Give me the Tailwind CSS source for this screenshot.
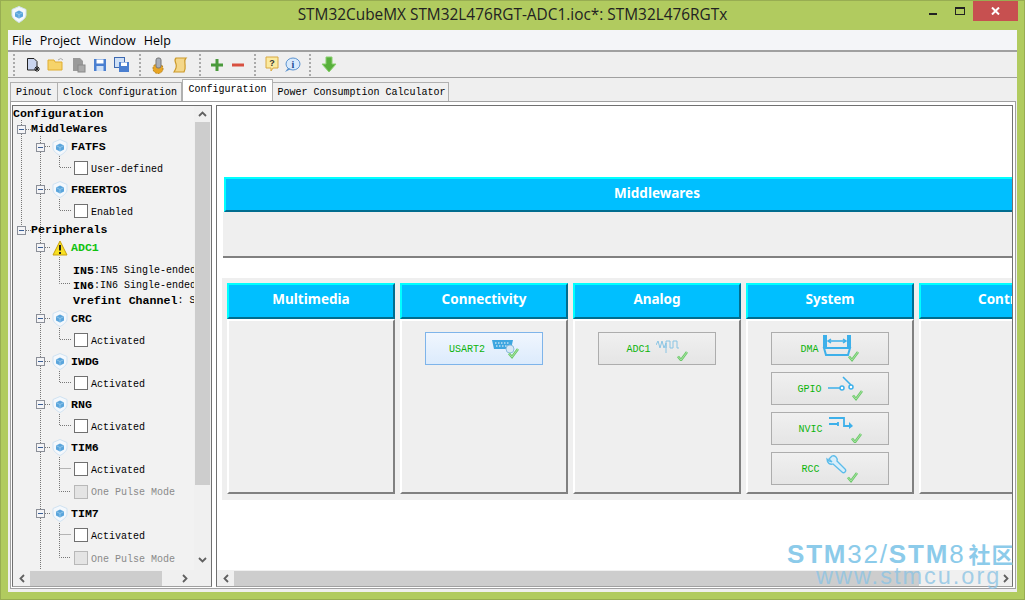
<!DOCTYPE html>
<html><head><meta charset="utf-8"><script src="https://cdn.jsdelivr.net/npm/@tailwindcss/browser@4"></script></head>
<body class="m-0 overflow-hidden">
<svg width="0" height="0" class="absolute">
<defs>
<g id="cube"><path d="M8 0.5 L15 3.5 V9 C15 12 11 15 8 16.5 C5 15 1 12 1 9 V3.5Z" fill="#f4f8fc" stroke="#cfe2f2"/><path d="M8 4.5 L12 6.5 V10.5 L8 12.5 L4 10.5 V6.5Z" fill="#5aa5dc"/><path d="M4 6.5 L8 8.5 L12 6.5 M8 8.5 V12.5" fill="none" stroke="#a8d2ee" stroke-width=".7"/></g>
<g id="minus"><rect x=".5" y=".5" width="8" height="8" fill="#f4f4f6" stroke="#8b8f98"/><rect x="2" y="4" width="5" height="1" fill="#3b5f95"/></g>
<g id="chk"><path d="M1 6.5 L4 10 L10 2" fill="none" stroke="#6cc86a" stroke-width="2.6"/><path d="M1 6.5 L4 10 L10 2" fill="none" stroke="#a6e4a0" stroke-width="1"/></g>
</defs>
</svg>
<div class="relative w-[1025px] h-[600px] bg-[#b1cb5f] border border-[#98ad52] pt-[29px] pl-[7px] pr-[7px] pb-[7px] overflow-hidden font-['Liberation_Mono',monospace]">
  <!-- title bar -->
  <svg class="absolute left-[10px] top-[5px]" width="16" height="17" viewBox="0 0 16 17"><use href="#cube"/></svg>
  <div class="absolute left-0 right-0 top-[5px] text-center text-[15.4px] leading-[18px] text-[#222] font-['Open_Sans',sans-serif]">STM32CubeMX STM32L476RGT-ADC1.ioc*: STM32L476RGTx</div>
  <div class="absolute left-[928px] top-[12px] w-[8px] h-[2px] bg-[#222]"></div>
  <div class="absolute left-[954px] top-[6px] w-[10px] h-[8px] border border-t-2 border-[#222]"></div>
  <div class="absolute left-[972px] top-0 w-[45px] h-[20px] bg-[#c75050] flex items-center justify-center text-white"><svg width="9" height="8" viewBox="0 0 9 8"><path d="M1 0.5 L8 7.5 M8 0.5 L1 7.5" stroke="#fff" stroke-width="2"/></svg></div>

  <div class="w-[1009px] h-[562px] bg-[#efefef] flex flex-col">
    <!-- menu -->
    <div class="h-[18px] pt-[2px] bg-[#f4f5f8] border-b-2 border-[#a0a0a0] box-content flex items-center gap-[8px] pl-[4px] text-[12.5px] text-black font-['Open_Sans',sans-serif]">
      <span>File</span><span>Project</span><span>Window</span><span>Help</span>
    </div>
    <!-- toolbar -->
    <div class="h-[25px] border-b border-[#a0a0a0] box-content flex items-center pl-[5px]">
      <div class="w-[2px] h-[22px] border-l-2 border-dotted border-[#aaa] mr-[10px]"></div>
      <div class="flex items-center gap-[6px]">
        <svg width="16" height="16" viewBox="0 0 16 16"><path d="M2.5 1.5H9L12 4.5V13H2.5Z" fill="#c9d4ee" stroke="#222"/><path d="M10 10L14 14M14 10L10 14M12 9V15M9 12H15" stroke="#222" stroke-width="1"/></svg>
        <svg width="18" height="16" viewBox="0 0 18 16"><path d="M1 3H7L8 5H15V13H1Z" fill="#f6d36a" stroke="#e0ad30"/><path d="M11 3 Q14 0 16 3" fill="none" stroke="#aaa"/></svg>
        <svg width="16" height="16" viewBox="0 0 16 16"><path d="M2 1H9L12 4V14H2Z" fill="#9a9a9a"/><rect x="7" y="8" width="7" height="7" fill="#aaa" stroke="#888"/></svg>
        <svg width="15" height="16" viewBox="0 0 15 16"><rect x="1" y="2" width="12" height="12" fill="#4a7fd0"/><rect x="3.5" y="2.5" width="7" height="4" fill="#fff"/><rect x="3.5" y="9" width="7" height="5" fill="#cfe0f6"/></svg>
        <svg width="16" height="16" viewBox="0 0 16 16"><rect x="0.5" y="0.5" width="10" height="10" fill="#cfe0f6" stroke="#3c68b0"/><rect x="5" y="5" width="10" height="10" fill="#4a7fd0"/><rect x="7" y="5.5" width="6" height="3.5" fill="#fff"/></svg>
      </div>
      <div class="w-[2px] h-[22px] border-l-2 border-dotted border-[#aaa] ml-[9px] mr-[8px]"></div>
      <div class="flex items-center gap-[4px]">
        <svg width="18" height="18" viewBox="0 0 18 18"><circle cx="9" cy="12.5" r="5" fill="#e8a524" stroke="#b67d10" stroke-dasharray="2 1"/><rect x="7" y="2" width="5" height="10" rx="2" fill="#a8aeb8" stroke="#777"/></svg>
        <svg width="18" height="18" viewBox="0 0 18 18"><path d="M5 2H15C13 4 14 6 14 8S15 12 13 16H3C5 13 6 11 5 8S3 4 5 2Z" fill="#f4d78a" stroke="#cc9a2a" stroke-width="1.2"/></svg>
      </div>
      <div class="w-[2px] h-[22px] border-l-2 border-dotted border-[#aaa] ml-[10px] mr-[9px]"></div>
      <div class="flex items-center gap-[7px]">
        <svg width="14" height="14" viewBox="0 0 14 14"><path d="M7 1V13M1 7H13" stroke="#4a9a3c" stroke-width="3"/></svg>
        <svg width="14" height="14" viewBox="0 0 14 14"><path d="M1 7H13" stroke="#d85040" stroke-width="3"/></svg>
      </div>
      <div class="w-[2px] h-[22px] border-l-2 border-dotted border-[#aaa] ml-[9px] mr-[9px]"></div>
      <div class="flex items-center gap-[4px]">
        <svg width="14" height="17" viewBox="0 0 14 17"><path d="M1 1H13V12H8L6 15V12H1Z" fill="#fbeaa0" stroke="#d8a840"/><text x="7" y="10" font-size="9" font-weight="700" text-anchor="middle" fill="#333" font-family="Liberation Sans">?</text></svg>
        <svg width="18" height="16" viewBox="0 0 18 16"><ellipse cx="10" cy="7" rx="7" ry="6" fill="#d8eafc" stroke="#5b93d0"/><path d="M5 11 L2 15 L8 12Z" fill="#5b93d0"/><text x="10" y="11" font-size="10" font-weight="700" text-anchor="middle" fill="#1c4d96" font-family="Liberation Serif">i</text></svg>
      </div>
      <div class="w-[2px] h-[22px] border-l-2 border-dotted border-[#aaa] ml-[8px] mr-[10px]"></div>
      <svg width="16" height="17" viewBox="0 0 16 17"><path d="M5 1H11V8H15L8 16L1 8H5Z" fill="#58b03c" stroke="#8ad070"/></svg>
    </div>
    <!-- tabs -->
    <div class="h-[23px] flex items-end pl-[2px] text-[10px] text-black">
      <div class="h-[19px] w-[48px] bg-[#f0f0f0] border border-b-0 border-[#b0b0b0] flex items-center justify-center">Pinout</div>
      <div class="h-[19px] w-[124px] pl-[1px] bg-[#f0f0f0] border border-l-0 border-b-0 border-[#b0b0b0] flex items-center justify-center">Clock Configuration</div>
      <div class="h-[22px] w-[91px] bg-white border border-b-0 border-[#b0b0b0] flex items-center justify-center pb-[3px]">Configuration</div>
      <div class="h-[19px] w-[176px] pl-[2px] bg-[#f0f0f0] border border-l-0 border-b-0 border-[#b0b0b0] flex items-center justify-center">Power Consumption Calculator</div>
    </div>
    <!-- pane -->
    <div class="flex-1 mx-[2px] mb-[3px] bg-white border border-[#a0a0a0] p-[1px] flex gap-[4px] min-h-0 w-[1006px]">
      <!-- tree panel -->
      <div class="w-[200px] h-[482px] mt-[2px] border border-[#707070] border-b-[#a0a0a0] bg-[#f2f2f2] flex flex-col">
        <div class="flex h-[464px] shrink-0">
          <div class="relative w-[181px] h-[464px] overflow-hidden text-[10px] text-black pt-[1px] whitespace-nowrap">
            <svg class="absolute left-0 top-0" width="181" height="464" viewBox="13 106 181 464" fill="none" stroke="#777" stroke-dasharray="1 1">
              <path d="M21.5 120V226M40.5 136V570M26 129.5H31M26 230.5H31"/>
              <path d="M45 146.5H51M45 189.5H51M45 247.5H51M45 318.5H51M45 361.5H51M45 404.5H51M45 447.5H51M45 513.5H51"/>
              <path d="M59.5 156V167.5H71M59.5 199V210.5H71M59.5 257V283.5H71M59.5 328V339.5H71M59.5 371V382.5H71M59.5 414V425.5H71M59.5 457V491.5H71M59.5 468.5H71M59.5 523V557.5H71M59.5 534.5H71"/>
            </svg>
            <div class="relative h-[14px] leading-[14px] font-bold text-[11.6px]">Configuration</div>
            <div class="relative h-[16px] flex items-center pl-[4px] gap-[5px] font-bold text-[11.6px]"><svg width="9" height="9"><use href="#minus"/></svg><span>MiddleWares</span></div>

            <div class="relative h-[20px] flex items-center pl-[23px] gap-[7px] font-bold text-[11.6px]"><svg width="9" height="9"><use href="#minus"/></svg><svg width="16" height="17" viewBox="0 0 16 17"><use href="#cube"/></svg><span class="-ml-[4px]">FATFS</span></div>
            <div class="relative h-[22px] flex items-center pl-[61px] gap-[3px]"><span class="w-[14px] h-[14px] bg-white border border-[#707070]"></span><span class="mt-[2px]">User-defined</span></div>
            <div class="relative h-[21px] flex items-center pl-[23px] gap-[7px] font-bold text-[11.6px]"><svg width="9" height="9"><use href="#minus"/></svg><svg width="16" height="17" viewBox="0 0 16 17"><use href="#cube"/></svg><span class="-ml-[4px]">FREERTOS</span></div>
            <div class="relative h-[22px] flex items-center pl-[61px] gap-[3px]"><span class="w-[14px] h-[14px] bg-white border border-[#707070]"></span><span class="mt-[2px]">Enabled</span></div>

            <div class="relative h-[16px] flex items-center pl-[4px] gap-[5px] font-bold text-[11.6px]"><svg width="9" height="9"><use href="#minus"/></svg><span>Peripherals</span></div>
            <div class="relative h-[19px] mb-[5px] flex items-center pl-[23px] gap-[7px] font-bold text-[11.6px] text-[#0fc20f]"><svg width="9" height="9"><use href="#minus"/></svg><svg width="16" height="16" viewBox="0 0 16 16"><path d="M8 1 L15 15 H1Z" fill="#f8e020" stroke="#c8a010"/><path d="M8 5V10.5M8 12V14" stroke="#222" stroke-width="2"/></svg><span class="-ml-[4px]">ADC1</span></div>
            <div class="relative h-[15px] pt-[2px] flex items-center pl-[60px]"><b class="text-[11.6px]">IN5</b>:IN5 Single-ended</div>
            <div class="relative h-[15px] pt-[2px] flex items-center pl-[60px]"><b class="text-[11.6px]">IN6</b>:IN6 Single-ended</div>
            <div class="relative h-[15px] pt-[2px] mb-[1px] flex items-center pl-[60px]"><b class="text-[11.6px]">Vrefint Channel</b>: Single</div>

            <div class="relative h-[21px] flex items-center pl-[23px] gap-[7px] font-bold text-[11.6px]"><svg width="9" height="9"><use href="#minus"/></svg><svg width="16" height="17" viewBox="0 0 16 17"><use href="#cube"/></svg><span class="-ml-[4px]">CRC</span></div>
            <div class="relative h-[22px] flex items-center pl-[61px] gap-[3px]"><span class="w-[14px] h-[14px] bg-white border border-[#707070]"></span><span class="mt-[2px]">Activated</span></div>
            <div class="relative h-[21px] flex items-center pl-[23px] gap-[7px] font-bold text-[11.6px]"><svg width="9" height="9"><use href="#minus"/></svg><svg width="16" height="17" viewBox="0 0 16 17"><use href="#cube"/></svg><span class="-ml-[4px]">IWDG</span></div>
            <div class="relative h-[22px] flex items-center pl-[61px] gap-[3px]"><span class="w-[14px] h-[14px] bg-white border border-[#707070]"></span><span class="mt-[2px]">Activated</span></div>
            <div class="relative h-[21px] flex items-center pl-[23px] gap-[7px] font-bold text-[11.6px]"><svg width="9" height="9"><use href="#minus"/></svg><svg width="16" height="17" viewBox="0 0 16 17"><use href="#cube"/></svg><span class="-ml-[4px]">RNG</span></div>
            <div class="relative h-[22px] flex items-center pl-[61px] gap-[3px]"><span class="w-[14px] h-[14px] bg-white border border-[#707070]"></span><span class="mt-[2px]">Activated</span></div>
            <div class="relative h-[21px] flex items-center pl-[23px] gap-[7px] font-bold text-[11.6px]"><svg width="9" height="9"><use href="#minus"/></svg><svg width="16" height="17" viewBox="0 0 16 17"><use href="#cube"/></svg><span class="-ml-[4px]">TIM6</span></div>
            <div class="relative h-[22px] flex items-center pl-[61px] gap-[3px]"><span class="w-[14px] h-[14px] bg-white border border-[#707070]"></span><span class="mt-[2px]">Activated</span></div>
            <div class="relative h-[23px] flex items-center pl-[61px] gap-[3px] text-[#8a8a8a]"><span class="w-[14px] h-[14px] bg-[#e4e4e4] border border-[#b8b8b8]"></span><span class="mt-[2px]">One Pulse Mode</span></div>
            <div class="relative h-[21px] flex items-center pl-[23px] gap-[7px] font-bold text-[11.6px]"><svg width="9" height="9"><use href="#minus"/></svg><svg width="16" height="17" viewBox="0 0 16 17"><use href="#cube"/></svg><span class="-ml-[4px]">TIM7</span></div>
            <div class="relative h-[22px] flex items-center pl-[61px] gap-[3px]"><span class="w-[14px] h-[14px] bg-white border border-[#707070]"></span><span class="mt-[2px]">Activated</span></div>
            <div class="relative h-[24px] flex items-center pl-[61px] gap-[3px] text-[#8a8a8a]"><span class="w-[14px] h-[14px] bg-[#e4e4e4] border border-[#b8b8b8]"></span><span class="mt-[2px]">One Pulse Mode</span></div>
          </div>
          <!-- v scrollbar -->
          <div class="w-[17px] bg-[#f0f0f0] flex flex-col items-center">
            <svg class="my-[5px] shrink-0" width="9" height="6" viewBox="0 0 9 6"><path d="M1 5 L4.5 1.5 L8 5" fill="none" stroke="#606060" stroke-width="1.8"/></svg>
            <div class="w-[15px] h-[363px] bg-[#cdcdcd]"></div>
            <svg class="mt-[72px] shrink-0" width="9" height="6" viewBox="0 0 9 6"><path d="M1 1 L4.5 4.5 L8 1" fill="none" stroke="#606060" stroke-width="1.8"/></svg>
          </div>
        </div>
        <!-- h scrollbar -->
        <div class="h-[16px] bg-[#f0f0f0] flex items-center">
          <svg class="ml-[6px] mr-[5px] shrink-0" width="6" height="9" viewBox="0 0 6 9"><path d="M5 1 L1.5 4.5 L5 8" fill="none" stroke="#606060" stroke-width="1.8"/></svg>
          <div class="w-[132px] h-[15px] bg-[#cdcdcd]"></div>
          <svg class="ml-[20px] shrink-0" width="6" height="9" viewBox="0 0 6 9"><path d="M1 1 L4.5 4.5 L1 8" fill="none" stroke="#606060" stroke-width="1.8"/></svg>
        </div>
      </div>
      <!-- main panel -->
      <div class="w-[797px] h-[482px] mt-[2px] border border-[#707070] border-b-[#a0a0a0] bg-white flex flex-col">
        <div class="flex-1 min-h-0 overflow-hidden pt-[71px]">
          <div class="ml-[7px] w-[864px] h-[35px] bg-[#00bfff] border-t-2 border-l-2 border-t-[#00ffff] border-l-[#00ffff] border-b-2 border-b-[#006d8f] flex items-center justify-center pb-[3px] text-white font-bold text-[13.5px] font-['Noto_Sans',sans-serif]">Middlewares</div>
          <div class="ml-[6px] w-[800px] h-[46px] bg-[#efefef] border-b-2 border-[#808080]"></div>
          <div class="ml-[5px] mt-[20px] w-[810px] h-[222px] bg-[#efefef] p-[5px] grid grid-cols-[168px_168px_168px_168px_168px] gap-[5px] font-['Noto_Sans',sans-serif]">

            <div class="flex flex-col">
              <div class="h-[36px] bg-[#00bfff] border-t-2 border-l-2 border-t-[#00ffff] border-l-[#00ffff] border-b-2 border-r-2 border-b-[#006d8f] border-r-[#006d8f] flex items-center justify-center pb-[4px] text-white font-bold text-[13.5px]">Multimedia</div>
              <div class="h-[175px] bg-[#efefef] border-2 border-t-white border-l-white border-r-[#808080] border-b-[#808080]"></div>
            </div>

            <div class="flex flex-col">
              <div class="h-[36px] bg-[#00bfff] border-t-2 border-l-2 border-t-[#00ffff] border-l-[#00ffff] border-b-2 border-r-2 border-b-[#006d8f] border-r-[#006d8f] flex items-center justify-center pb-[4px] text-white font-bold text-[13.5px]">Connectivity</div>
              <div class="h-[175px] bg-[#efefef] border-2 border-t-white border-l-white border-r-[#808080] border-b-[#808080] pt-[11px] flex flex-col items-center">
                <div class="w-[118px] h-[33px] border border-[#7eb4ea] bg-gradient-to-b from-[#f0f6fe] to-[#dcebfc] flex items-center justify-center gap-[6px] font-['Liberation_Mono',monospace] text-[10px] text-[#0cb40c]">
                  <span class="mt-[2px]">USART2</span>
                  <svg width="28" height="24" viewBox="0 0 28 24"><path d="M1 3H22L20 12H3Z" fill="#3da6e0"/><path d="M4 6H19M5 9H18" stroke="#fff" stroke-dasharray="1.5 1.5"/><circle cx="19" cy="12" r="4" fill="#d8e8f4" stroke="#8cbcdc"/><use href="#chk" x="17" y="10"/></svg>
                </div>
              </div>
            </div>

            <div class="flex flex-col">
              <div class="h-[36px] bg-[#00bfff] border-t-2 border-l-2 border-t-[#00ffff] border-l-[#00ffff] border-b-2 border-r-2 border-b-[#006d8f] border-r-[#006d8f] flex items-center justify-center pb-[4px] text-white font-bold text-[13.5px]">Analog</div>
              <div class="h-[175px] bg-[#efefef] border-2 border-t-white border-l-white border-r-[#808080] border-b-[#808080] pt-[11px] flex flex-col items-center">
                <div class="w-[118px] h-[33px] border border-[#adadad] bg-gradient-to-b from-[#f0f0f0] to-[#e5e5e5] flex items-center justify-center gap-[5px] font-['Liberation_Mono',monospace] text-[10px] text-[#0cb40c]">
                  <span class="mt-[2px]">ADC1</span>
                  <svg width="32" height="24" viewBox="0 0 32 24"><path d="M0 8 L2 4 L4 11 L6 4 L8 11 L10 6 V16 M10 11 V4 H14 V11 H17 V4 H21 V11 H23" fill="none" stroke="#88c4e4"/><use href="#chk" x="21" y="13"/></svg>
                </div>
              </div>
            </div>

            <div class="flex flex-col">
              <div class="h-[36px] bg-[#00bfff] border-t-2 border-l-2 border-t-[#00ffff] border-l-[#00ffff] border-b-2 border-r-2 border-b-[#006d8f] border-r-[#006d8f] flex items-center justify-center pb-[4px] text-white font-bold text-[13.5px]">System</div>
              <div class="h-[175px] bg-[#efefef] border-2 border-t-white border-l-white border-r-[#808080] border-b-[#808080] pt-[11px] flex flex-col items-center gap-[7px]">
                <div class="w-[118px] h-[33px] shrink-0 border border-[#adadad] bg-gradient-to-b from-[#f0f0f0] to-[#e5e5e5] flex items-center justify-center gap-[3px] font-['Liberation_Mono',monospace] text-[10px] text-[#0cb40c]">
                  <span class="mt-[2px]">DMA</span>
                  <svg width="38" height="29" viewBox="0 0 38 29"><path d="M3 1V13M27 1V13" stroke="#3db0ea" stroke-width="4"/><path d="M7 7H23M9 5 L6 7 L9 9M21 5 L24 7 L21 9" fill="none" stroke="#3db0ea" stroke-width="1.5"/><path d="M2 14H28L26 21H4Z" fill="none" stroke="#3db0ea" stroke-width="2"/><use href="#chk" x="26" y="16"/></svg>
                </div>
                <div class="w-[118px] h-[33px] shrink-0 border border-[#adadad] bg-gradient-to-b from-[#f0f0f0] to-[#e5e5e5] flex items-center justify-center gap-[5px] font-['Liberation_Mono',monospace] text-[10px] text-[#0cb40c]">
                  <span class="mt-[2px]">GPIO</span>
                  <svg width="36" height="26" viewBox="0 0 36 26"><path d="M1 12H14M16 1 L24 9" stroke="#3db0ea" stroke-width="1.6"/><circle cx="15" cy="12" r="2" fill="#fff" stroke="#3db0ea" stroke-width="1.5"/><circle cx="24" cy="11" r="2" fill="#fff" stroke="#3db0ea" stroke-width="1.5"/><use href="#chk" x="25" y="13"/></svg>
                </div>
                <div class="w-[118px] h-[33px] shrink-0 border border-[#adadad] bg-gradient-to-b from-[#f0f0f0] to-[#e5e5e5] flex items-center justify-center gap-[5px] font-['Liberation_Mono',monospace] text-[10px] text-[#0cb40c]">
                  <span class="mt-[2px]">NVIC</span>
                  <svg width="34" height="28" viewBox="0 0 34 28"><path d="M1 3H16V11H22M1 9H10M10 7V11" fill="none" stroke="#3db0ea" stroke-width="1.8"/><path d="M21 7 L25 11 L21 14Z" fill="#3db0ea"/><use href="#chk" x="23" y="17"/></svg>
                </div>
                <div class="w-[118px] h-[33px] shrink-0 border border-[#adadad] bg-gradient-to-b from-[#f0f0f0] to-[#e5e5e5] flex items-center justify-center gap-[5px] font-['Liberation_Mono',monospace] text-[10px] text-[#0cb40c]">
                  <span class="mt-[2px]">RCC</span>
                  <svg width="34" height="30" viewBox="0 0 34 30"><path d="M7 2 L4 5 L7 8 L4 7 L2 5 C2 9 5 11 8 10 L17 18 C19 20 22 17 20 15 L12 7 C13 4 10 1 7 2Z" fill="#d8eefa" stroke="#5cbcea" stroke-width="1.3"/><use href="#chk" x="22" y="17"/></svg>
                </div>
              </div>
            </div>

            <div class="flex flex-col">
              <div class="h-[36px] bg-[#00bfff] border-t-2 border-l-2 border-t-[#00ffff] border-l-[#00ffff] border-b-2 border-r-2 border-b-[#006d8f] border-r-[#006d8f] flex items-center justify-center pb-[4px] text-white font-bold text-[13.5px]">Control</div>
              <div class="h-[175px] bg-[#efefef] border-2 border-t-white border-l-white border-r-[#808080] border-b-[#808080]"></div>
            </div>
          </div>
        </div>
        <!-- h scrollbar -->
        <div class="h-[16px] bg-[#f0f0f0] flex items-center shrink-0">
          <svg class="ml-[6px] mr-[5px] shrink-0" width="6" height="9" viewBox="0 0 6 9"><path d="M5 1 L1.5 4.5 L5 8" fill="none" stroke="#606060" stroke-width="1.8"/></svg>
          <div class="w-[685px] h-[15px] bg-[#cdcdcd]"></div>
          <svg class="ml-[84px] shrink-0" width="6" height="9" viewBox="0 0 6 9"><path d="M1 1 L4.5 4.5 L1 8" fill="none" stroke="#606060" stroke-width="1.8"/></svg>
        </div>
      </div>
    </div>
  </div>

  <!-- watermark -->
  <div class="absolute left-[786px] top-[543px] w-[240px] text-[26px] leading-[20px] tracking-[1.8px] whitespace-nowrap text-[#8ccbea] font-['Liberation_Sans','Noto_Sans_CJK_SC',sans-serif]"><b>STM</b>32/<b>STM</b>8<b class="text-[22px] tracking-[1px] ml-[3px]">社区</b></div>
  <div class="absolute left-[815px] top-[565px] text-[23.5px] leading-[20px] tracking-[2px] whitespace-nowrap text-[#8cc4e4]/80 font-['Liberation_Sans',sans-serif]">www.stmcu.org</div>
</div>
</body></html>
